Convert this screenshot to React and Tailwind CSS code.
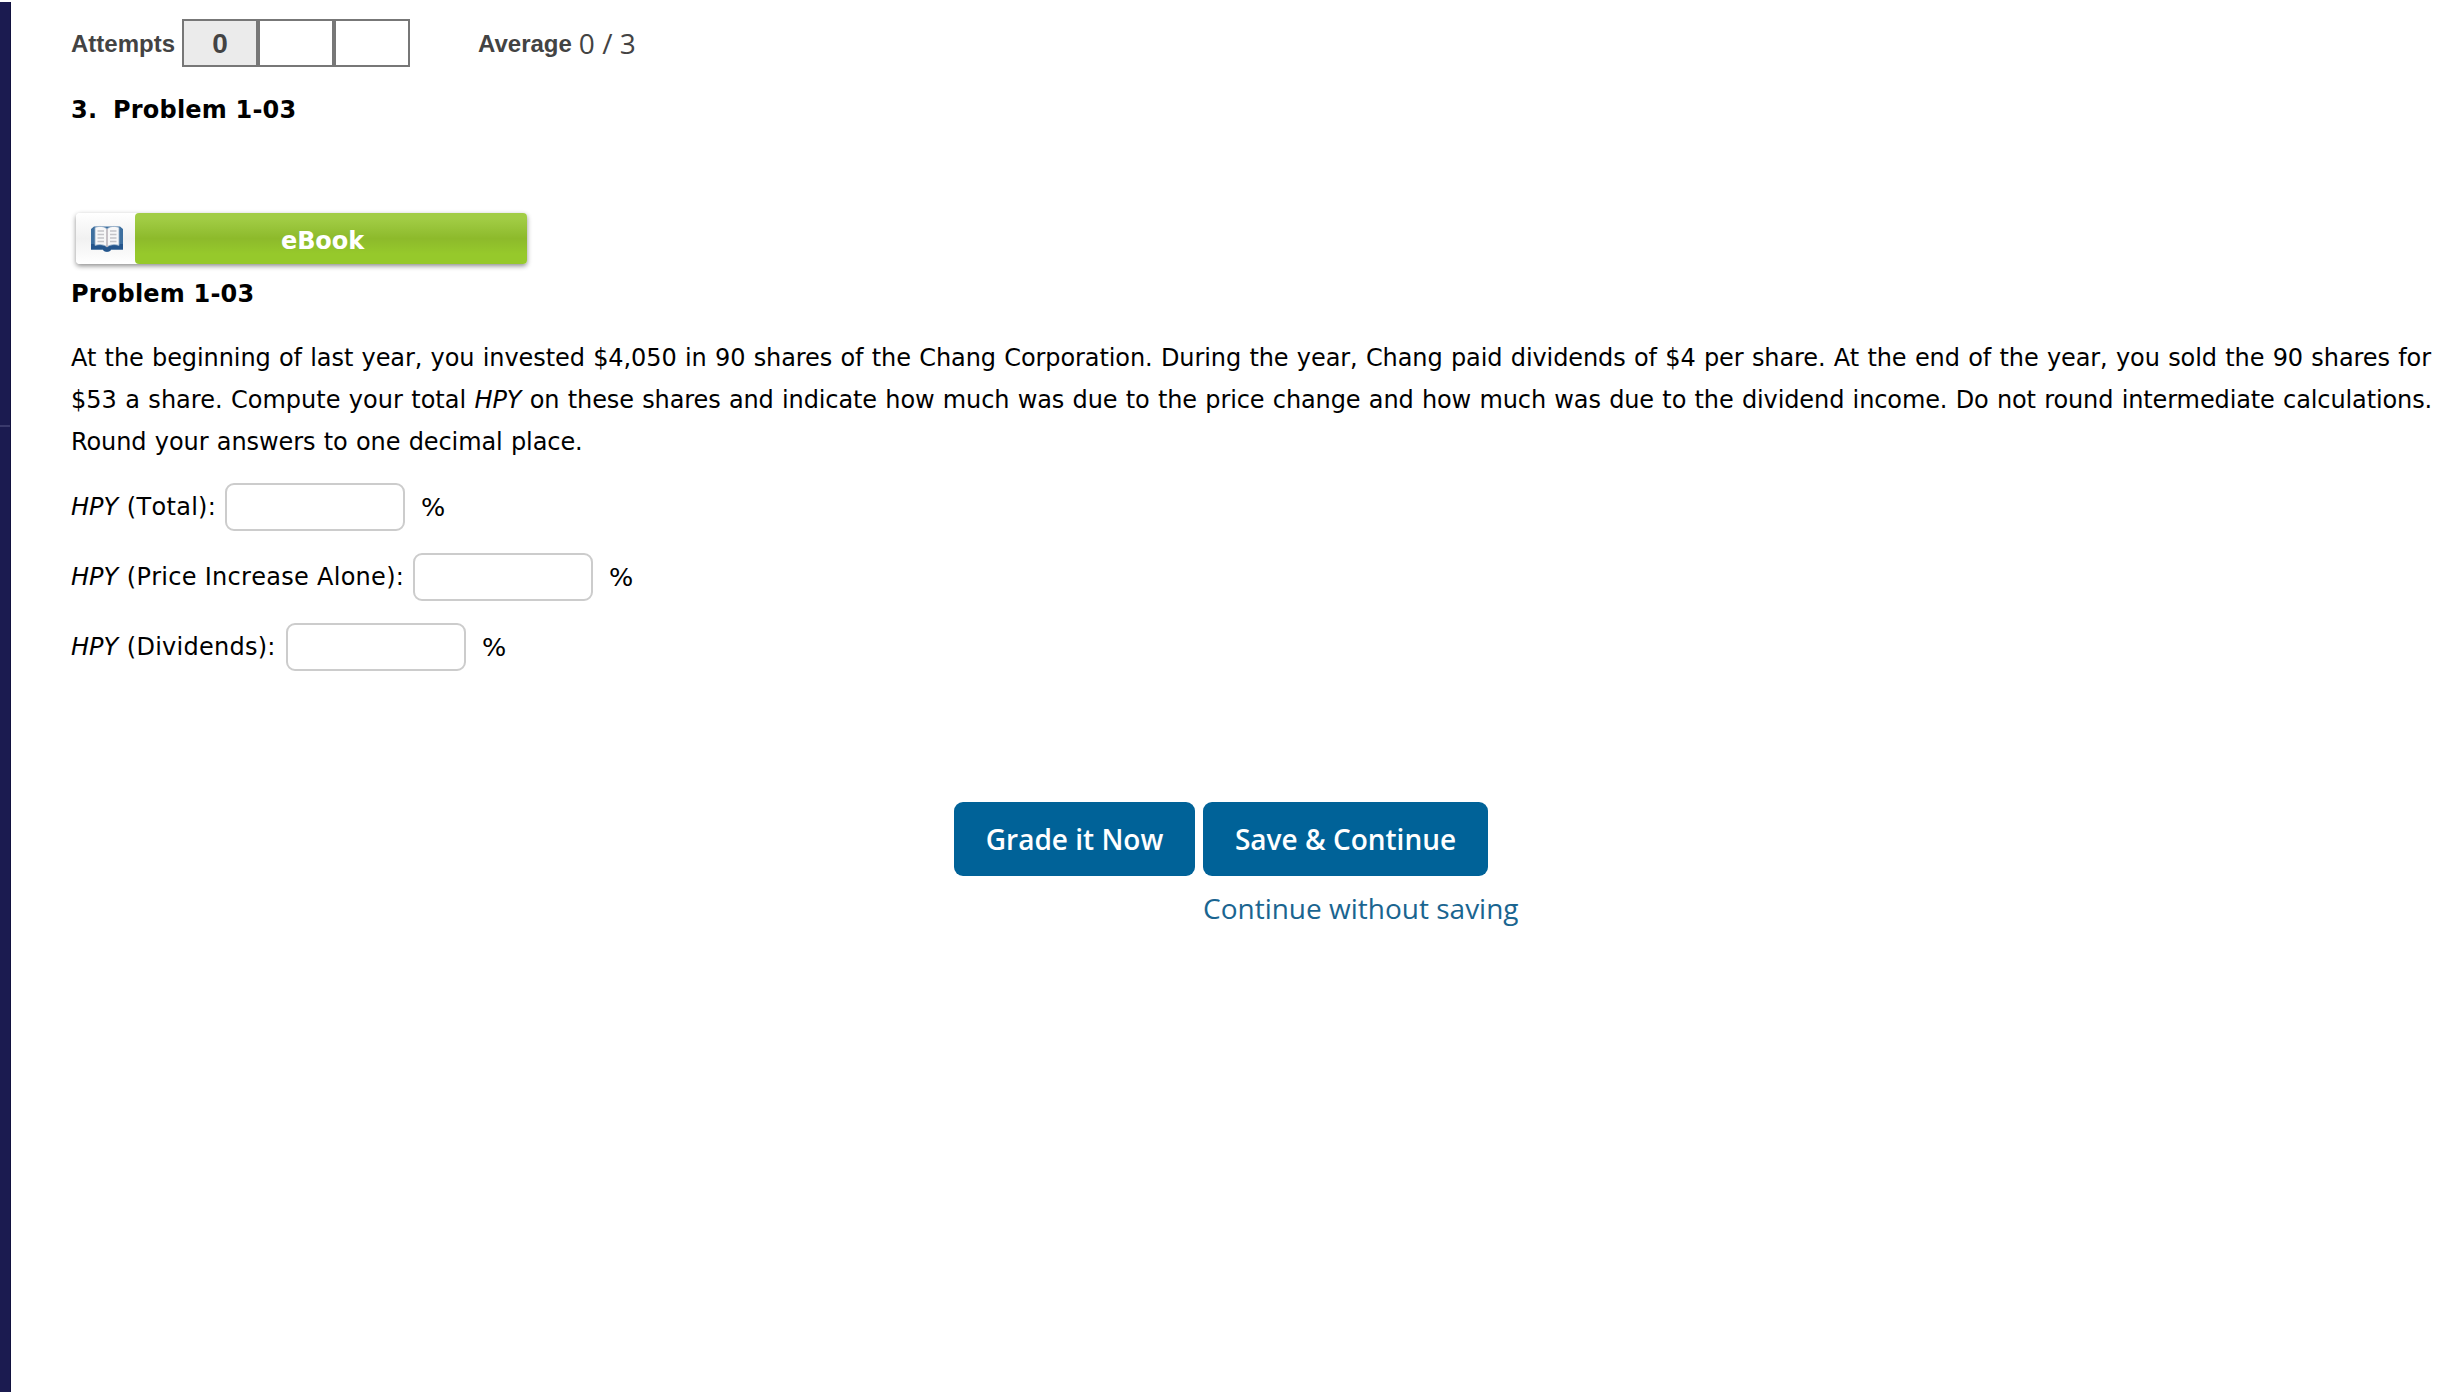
import React from "react";

const BOOK = (
  <svg width="34" height="29" viewBox="0 0 34 29" className="block">
    <path d="M1 4 L4 1.5 H30 L33 4 V24.5 H21 C20 27.5 14 27.5 13 24.5 H1 Z" fill="#3d6f9f" />
    <path d="M1 19 H33 V24.5 H21 C20 27.5 14 27.5 13 24.5 H1 Z" fill="#24558c" />
    <path d="M5 2.5 C9 0.8 14 1 17 4 C20 1 25 0.8 29 2.5 V20.5 C25 19 20 19.5 17 22 C14 19.5 9 19 5 20.5 Z" fill="#f7f7f8" stroke="#8fa9c4" strokeWidth="0.8" />
    <path d="M17 4 V22" stroke="#b9b3ba" strokeWidth="1.6" />
    <path d="M7.5 6 H14 M7.5 9.5 H14 M7.5 13 H14 M7.5 16.5 H14 M20 6 H26.5 M20 9.5 H26.5 M20 13 H26.5 M20 16.5 H26.5" stroke="#c4c4c8" strokeWidth="1.6" />
  </svg>
);

function Answer({ label, width, tracking }) {
  return (
    <div className="flex h-12 items-center whitespace-nowrap leading-[42px]">
      <span className={width}>
        <i className="mr-[1px]">HPY</i> <span className={`[font-kerning:none] ${tracking}`}>{label}</span>
      </span>
      <input className="h-12 w-[180px] rounded-[9px] border-2 border-[#cccccc] bg-white px-2 outline-none" />
      <span className="ml-[16px] text-[25.5px]">%</span>
    </div>
  );
}

export default function App() {
  return (
    <div className="flex h-[1392px] w-[2450px] overflow-hidden bg-white">
      <aside className="mt-[2px] w-[11px] shrink-0 border-r border-[#12123f] bg-[#1b1b50]">
        <div className="mt-[423px] h-[2px] bg-[#3a3a6c]" />
      </aside>

      <main className="flex flex-1 flex-col pl-[60px] font-['DejaVu_Sans',sans-serif] text-[24px] text-black">
        <div className="mt-[19px] flex h-12 items-center font-['Liberation_Sans',sans-serif] text-[24px] font-bold text-[#434343]">
          <span className="w-[111px] pt-px">Attempts</span>
          <div className="flex h-12">
            <div className="flex w-[76px] items-center justify-center border-2 border-[#777777] bg-[#ebebeb] text-[28px]">
              <span className="mt-px">0</span>
            </div>
            <div className="w-[76px] border-2 border-[#777777]" />
            <div className="w-[76px] border-2 border-[#777777]" />
          </div>
          <span className="ml-[68px] pt-px">Average</span>
          <span className="ml-[7px] font-['Open_Sans',sans-serif] text-[28px] font-normal leading-[48px]">0 / 3</span>
        </div>

        <div className="mt-[22px] flex font-bold leading-[42px] tracking-[0.2px]">
          <span className="w-[42px]">3.</span>
          <h1>Problem 1-03</h1>
        </div>

        <button className="ml-[5px] mt-[82px] flex h-[51px] w-[451px] rounded-[4px] shadow-[0_2px_5px_rgba(0,0,0,0.45)]">
          <span className="flex h-full w-[59px] items-center justify-center rounded-l-[4px] bg-linear-to-b from-white via-[#f1f1f1] to-white pl-[2px] pt-[2px]">
            {BOOK}
          </span>
          <span className="flex h-full flex-1 items-center rounded-[4px] bg-linear-to-b from-[#a2cd45] from-10% via-[#8dba2b] via-50% to-[#96c92b] to-80% pl-[146px] pt-[4px] font-bold tracking-[-0.1px] text-white">
            eBook
          </span>
        </button>

        <h2 className="mt-[9px] font-bold leading-[42px] tracking-[0.2px]">Problem 1-03</h2>

        <p className="mt-[22px] whitespace-nowrap leading-[42px] tracking-[-0.09px] [word-spacing:0.8px]">
          At the beginning of last year, you invested $4,050 in 90 shares of the Chang Corporation. During the year, Chang paid dividends of $4 per share. At the end of the year, you sold the 90 shares for
          <br />
          <span className="tracking-[0px]">$53 a share. Compute your total </span>
          <i>HPY</i>
          <span className="tracking-[-0.11px]"> on these shares and indicate how much was due to the price change and how much was due to the dividend income. Do not round intermediate calculations.</span>
          <br />
          Round your answers to one decimal place.
        </p>

        <div className="mt-[20px] flex flex-col gap-[22px]">
          <Answer label="(Total):" width="w-[154px]" tracking="tracking-[0.3px]" />
          <Answer label="(Price Increase Alone):" width="w-[342px]" tracking="tracking-[0.28px]" />
          <Answer label="(Dividends):" width="w-[215px]" tracking="tracking-[0.25px]" />
        </div>

        <div className="ml-[883px] mt-[131px] flex gap-2 font-['Open_Sans',sans-serif] text-[28px]">
          <button className="h-[74px] w-[241px] whitespace-nowrap rounded-[9px] bg-[#006298] pb-px font-semibold text-white">Grade it Now</button>
          <div className="flex flex-col items-start">
            <button className="h-[74px] w-[285px] whitespace-nowrap rounded-[9px] bg-[#006298] pb-px font-semibold text-white">Save &amp; Continue</button>
            <a className="mt-[13px] whitespace-nowrap leading-[38px] text-[#1a6590]">Continue without saving</a>
          </div>
        </div>
      </main>
    </div>
  );
}
